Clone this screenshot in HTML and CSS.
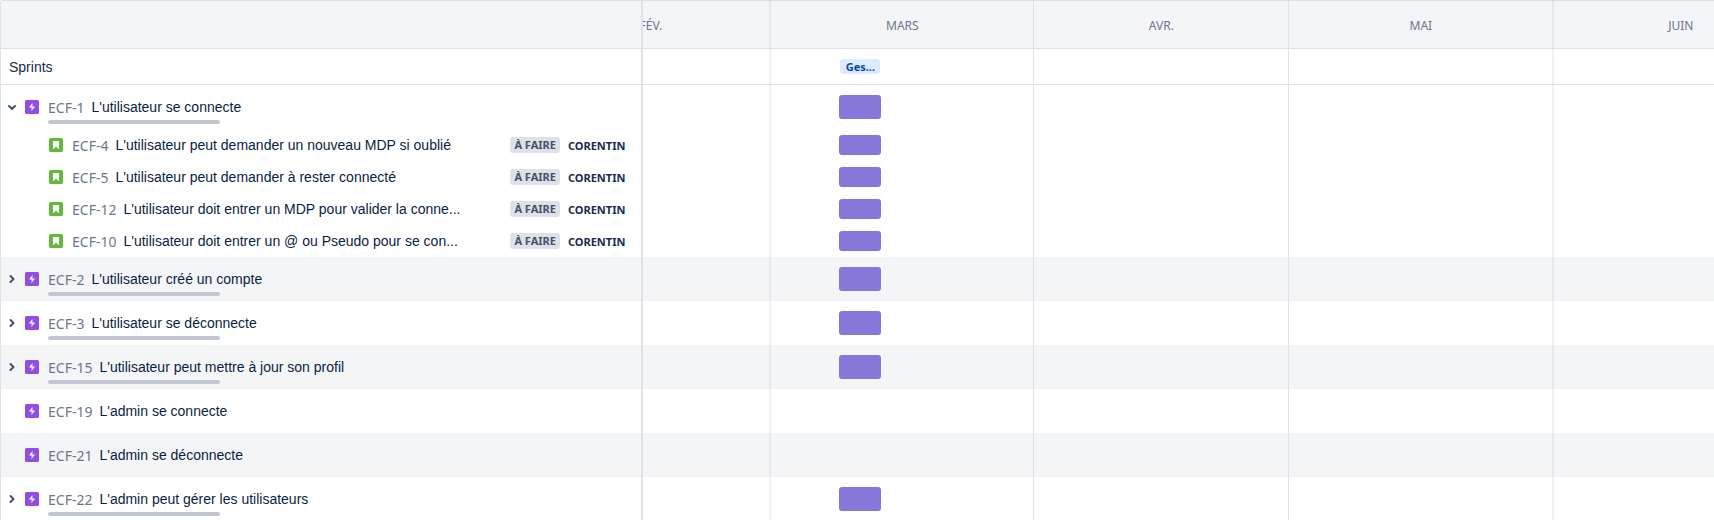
FILE: index.html
```html
<!DOCTYPE html>
<html lang="fr">
<head>
<meta charset="utf-8">
<meta name="viewport" content="width=device-width, initial-scale=1">
<title>Feuille de route</title>
<link rel="stylesheet" href="styles.css">
</head>
<body>
<svg class="sprite" aria-hidden="true">
  <symbol id="epic" viewBox="0 0 14 14"><rect width="14" height="14" rx="1.5" fill="#904ee2"/><path d="M7.5 3 4 7.6h2.7l-.2 3.4L10 6.4H7.4z" fill="#fff"/></symbol>
  <symbol id="story" viewBox="0 0 14 14"><rect width="14" height="14" rx="1.5" fill="#63ba3c"/><path d="M4 3.5a.5.5 0 0 1 .5-.5h5a.5.5 0 0 1 .5.5V11.300L7 8.700 4 11.300z" fill="#fff"/></symbol>
  <symbol id="right" viewBox="0 0 12 12"><path d="m4.500 3 3 3-3 3" fill="none" stroke="#42526e" stroke-width="2" stroke-linecap="round" stroke-linejoin="round"/></symbol>
  <symbol id="down" viewBox="0 0 12 12"><path d="m3 5 3 3 3-3" fill="none" stroke="#42526e" stroke-width="2" stroke-linecap="round" stroke-linejoin="round"/></symbol>
</svg>
<main class="roadmap">
  <section class="panel" aria-label="Tickets">
    <div class="head"></div>
    <div class="sprints">Sprints</div>

    <div class="row epic">
      <button class="toggle" aria-label="Réduire" aria-expanded="true"><svg><use href="#down"/></svg></button>
      <svg class="type"><use href="#epic"/></svg>
      <div class="issue"><a class="key" href="#">ECF-1</a><span class="title">L'utilisateur se connecte</span><span class="progress"></span></div>
    </div>
    <div class="row child">
      <svg class="type"><use href="#story"/></svg>
      <div class="issue"><a class="key" href="#">ECF-4</a><span class="title">L'utilisateur peut demander un nouveau MDP si oublié</span></div>
      <span class="status">À FAIRE</span><span class="person">CORENTIN</span>
    </div>
    <div class="row child">
      <svg class="type"><use href="#story"/></svg>
      <div class="issue"><a class="key" href="#">ECF-5</a><span class="title">L'utilisateur peut demander à rester connecté</span></div>
      <span class="status">À FAIRE</span><span class="person">CORENTIN</span>
    </div>
    <div class="row child">
      <svg class="type"><use href="#story"/></svg>
      <div class="issue"><a class="key" href="#">ECF-12</a><span class="title">L'utilisateur doit entrer un MDP pour valider la conne...</span></div>
      <span class="status">À FAIRE</span><span class="person">CORENTIN</span>
    </div>
    <div class="row child">
      <svg class="type"><use href="#story"/></svg>
      <div class="issue"><a class="key" href="#">ECF-10</a><span class="title">L'utilisateur doit entrer un @ ou Pseudo pour se con...</span></div>
      <span class="status">À FAIRE</span><span class="person">CORENTIN</span>
    </div>
    <div class="row epic striped">
      <button class="toggle" aria-label="Développer" aria-expanded="false"><svg><use href="#right"/></svg></button>
      <svg class="type"><use href="#epic"/></svg>
      <div class="issue"><a class="key" href="#">ECF-2</a><span class="title">L'utilisateur créé un compte</span><span class="progress"></span></div>
    </div>
    <div class="row epic">
      <button class="toggle" aria-label="Développer" aria-expanded="false"><svg><use href="#right"/></svg></button>
      <svg class="type"><use href="#epic"/></svg>
      <div class="issue"><a class="key" href="#">ECF-3</a><span class="title">L'utilisateur se déconnecte</span><span class="progress"></span></div>
    </div>
    <div class="row epic striped">
      <button class="toggle" aria-label="Développer" aria-expanded="false"><svg><use href="#right"/></svg></button>
      <svg class="type"><use href="#epic"/></svg>
      <div class="issue"><a class="key" href="#">ECF-15</a><span class="title">L'utilisateur peut mettre à jour son profil</span><span class="progress"></span></div>
    </div>
    <div class="row epic">
      <span class="toggle"></span>
      <svg class="type"><use href="#epic"/></svg>
      <div class="issue"><a class="key" href="#">ECF-19</a><span class="title">L'admin se connecte</span></div>
    </div>
    <div class="row epic striped">
      <span class="toggle"></span>
      <svg class="type"><use href="#epic"/></svg>
      <div class="issue"><a class="key" href="#">ECF-21</a><span class="title">L'admin se déconnecte</span></div>
    </div>
    <div class="row epic">
      <button class="toggle" aria-label="Développer" aria-expanded="false"><svg><use href="#right"/></svg></button>
      <svg class="type"><use href="#epic"/></svg>
      <div class="issue"><a class="key" href="#">ECF-22</a><span class="title">L'admin peut gérer les utilisateurs</span><span class="progress"></span></div>
    </div>
  </section>

  <section class="timeline" aria-label="Calendrier">
    <div class="head"></div>
    <div class="sprints"><span class="sprint">Ges...</span></div>
    <div class="row epic"><span class="bar"></span></div>
    <div class="row child"><span class="bar"></span></div>
    <div class="row child"><span class="bar"></span></div>
    <div class="row child"><span class="bar"></span></div>
    <div class="row child"><span class="bar"></span></div>
    <div class="row epic striped"><span class="bar"></span></div>
    <div class="row epic"><span class="bar"></span></div>
    <div class="row epic striped"><span class="bar"></span></div>
    <div class="row epic"></div>
    <div class="row epic striped"></div>
    <div class="row epic"><span class="bar"></span></div>
    <div class="months">
      <div class="month february">FÉV.</div>
      <div class="month long soft">MARS</div>
      <div class="month">AVR.</div>
      <div class="month long">MAI</div>
      <div class="month soft">JUIN</div>
    </div>
  </section>
</main>
</body>
</html>
```
FILE: styles.css
```css
* { box-sizing: border-box; }

body {
  margin: 0;
  background: #fff;
  color: #172b4d;
  font: 14px/20px "Liberation Sans", Arial, sans-serif;
}

.sprite { display: none; }

.roadmap {
  display: grid;
  grid-template-columns: 3fr 5fr;
  max-height: 100vh;
  overflow: hidden;
  border-left: 1px solid #dfe1e6;
  border-top-left-radius: 3px;
}

.panel {
  min-width: 0;
  border-right: 2px solid #dfe1e6;
}

.timeline {
  position: relative;
  min-width: 0;
  overflow: hidden;
}

.head {
  height: 49px;
  background: #f4f5f7;
  border: solid #dfe1e6;
  border-width: 1px 0;
}

.sprints {
  display: flex;
  align-items: center;
  height: 36px;
  padding: 0 8px;
  border-bottom: 1px solid #dfe1e6;
}

.row {
  display: flex;
  align-items: center;
}

.epic { height: 44px; }
.child { height: 32px; }
.striped { background: #f4f5f7; }

.panel .row { padding-right: 16px; }
.panel .child { padding-left: 48px; }

.toggle {
  flex: none;
  display: flex;
  width: 12px;
  height: 12px;
  margin: 0 7px 0 5px;
  padding: 0;
  border: 0;
  background: none;
  cursor: pointer;
}

.toggle svg { width: 12px; height: 12px; }

.type {
  flex: none;
  width: 14px;
  height: 14px;
  margin-right: 9px;
}

.issue {
  position: relative;
  flex: 1;
  display: flex;
  gap: 7px;
  height: 24px;
  min-width: 0;
  line-height: 24px;
  white-space: nowrap;
}

.key {
  padding-top: 1px;
  color: #6b778c;
  font: 14px/24px "Noto Sans", sans-serif;
  text-decoration: none;
}

.title {
  overflow: hidden;
  text-overflow: ellipsis;
  color: #091e42;
}

.progress {
  position: absolute;
  top: 25px;
  left: 0;
  width: 172px;
  height: 4px;
  border-radius: 2px;
  background: #c1c7d0;
}

.status,
.person,
.sprint {
  font: bold 11px/16px "Noto Sans", sans-serif;
}

.status {
  margin-right: 8px;
  padding: 0 4px;
  border-radius: 3px;
  background: #dfe1e6;
  color: #42526e;
}

.person { padding-top: 2px; }

.timeline .sprints,
.timeline .row { padding-left: 196px; }

.sprint {
  width: 40px;
  margin-left: 1px;
  border-radius: 3px;
  background: #deebff;
  color: #0747a6;
  line-height: 15px;
  text-align: center;
}

.bar {
  width: 42px;
  height: 24px;
  border-radius: 3px;
  background: #8777d9;
}

.child .bar { height: 20px; }

.months {
  position: absolute;
  inset: 0;
  display: flex;
  pointer-events: none;
}

.month {
  flex: none;
  width: 255px;
  padding-top: 16px;
  border-left: 1px solid #dfe1e6;
  color: #6b778c;
  font: 12px/20px "Noto Sans", sans-serif;
  text-align: center;
}

.long { width: 264px; }
.february { width: 238px; margin-left: -112px; }
.soft { border-left: 2px solid rgba(9, 30, 66, 0.06); }
```
